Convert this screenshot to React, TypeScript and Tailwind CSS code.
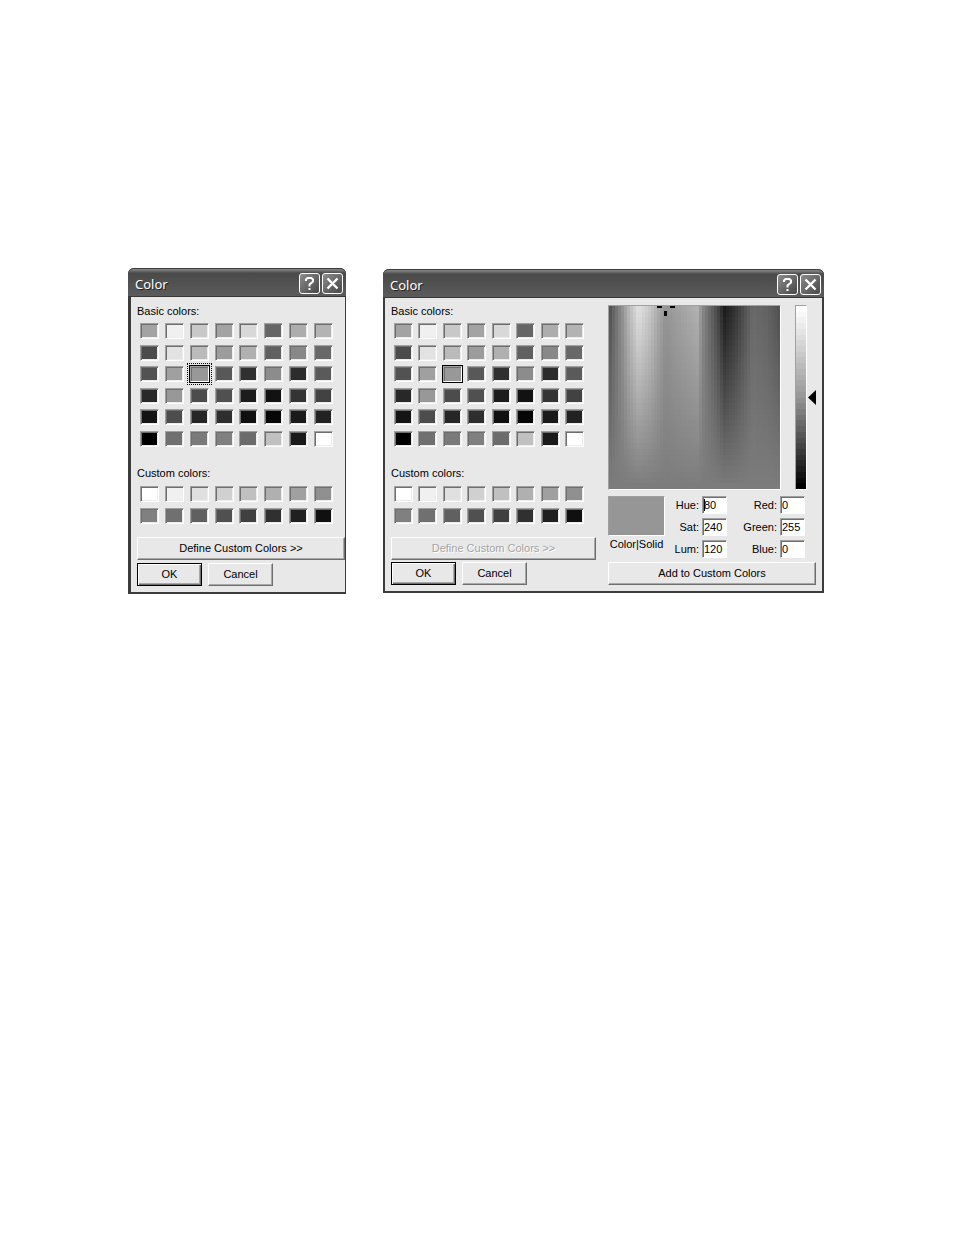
// Two states of the color picker: compact, and expanded with the custom color mixer.
import type { ReactNode } from "react";

const basicColors = [
  "#a3a3a3", "#f0f0f0", "#c8c8c8", "#a3a3a3", "#d8d8d8", "#666666", "#adadad", "#b3b3b3",
  "#4b4b4b", "#e2e2e2", "#bababa", "#9c9c9c", "#b0b0b0", "#606060", "#888888", "#686868",
  "#525252", "#a0a0a0", "#989898", "#585858", "#303030", "#8c8c8c", "#2c2c2c", "#5a5a5a",
  "#282828", "#989898", "#4c4c4c", "#505050", "#1c1c1c", "#121212", "#343434", "#424242",
  "#141414", "#4c4c4c", "#262626", "#2e2e2e", "#101010", "#060606", "#1a1a1a", "#222222",
  "#000000", "#707070", "#7a7a7a", "#808080", "#6c6c6c", "#c0c0c0", "#1a1a1a", "#ffffff",
];

const customColors = [
  "#ffffff", "#f0f0f0", "#e0e0e0", "#d0d0d0", "#c0c0c0", "#b0b0b0", "#a0a0a0", "#909090",
  "#808080", "#707070", "#606060", "#505050", "#404040", "#303030", "#202020", "#101010",
];

const SELECTED = 18;

// [x, gray level] along the top edge of the hue field
const hueStops = [
  [0, 80], [5, 106], [13, 146], [20, 188], [29, 226], [40, 200], [52, 160], [56, 148],
  [64, 156], [88, 176], [93, 136], [100, 106], [108, 72], [115, 28], [125, 50], [138, 90],
  [143, 106], [158, 98], [172, 78],
];

function grayAt(x: number) {
  const i = Math.max(1, hueStops.findIndex((s) => s[0] >= x));
  const [x0, g0] = hueStops[i - 1];
  const [x1, g1] = hueStops[i];
  return Math.round(g0 + ((g1 - g0) * (x - x0)) / (x1 - x0));
}

function gray(v: number) {
  return `rgb(${v}, ${v}, ${v})`;
}

const sunken =
  "border border-t-[#a0a0a0] border-l-[#a0a0a0] border-r-white border-b-white";

function Swatches({
  label,
  colors,
  selected,
  focused,
  className,
}: {
  label: string;
  colors: string[];
  selected?: number;
  focused?: boolean;
  className: string;
}) {
  return (
    <div
      role="group"
      aria-label={label}
      className={`grid grid-cols-[repeat(8,19px)] content-between justify-between pr-3 pl-[3px] ${className}`}
    >
      {colors.map((color, i) => (
        <button
          key={i}
          type="button"
          aria-label={color}
          style={{ backgroundColor: color }}
          className={`h-4 w-[19px] ${sunken} ${
            i === selected
              ? "shadow-[inset_1px_1px_#6e6e6e,0_0_0_1px_#000]"
              : "shadow-[inset_1px_1px_#6e6e6e,inset_-1px_-1px_#ececec]"
          } ${i === selected && focused ? "outline-1 outline-offset-2 outline-dotted outline-black" : ""}`}
        />
      ))}
    </div>
  );
}

function PushButton({
  children,
  primary,
  disabled,
  className = "",
}: {
  children: ReactNode;
  primary?: boolean;
  disabled?: boolean;
  className?: string;
}) {
  return (
    <button
      type="button"
      disabled={disabled}
      className={`h-[23px] border bg-[#e8e8e8] pb-px leading-4 ${
        primary
          ? "border-black shadow-[inset_1px_1px_#fff,inset_-1px_-1px_#6e6e6e,inset_-2px_-2px_#a8a8a8]"
          : "border-t-white border-r-[#6e6e6e] border-b-[#6e6e6e] border-l-white shadow-[inset_-1px_-1px_#a8a8a8]"
      } ${disabled ? "text-[#a4a4a4] [text-shadow:1px_1px_#fff]" : "text-black"} ${className}`}
    >
      {children}
    </button>
  );
}

function CaptionButton({ label, children }: { label: string; children: ReactNode }) {
  return (
    <button
      type="button"
      aria-label={label}
      className="flex size-[21px] items-center justify-center rounded-[3px] border border-white bg-linear-to-br from-[#8c8c8c] to-[#484848]"
    >
      <svg viewBox="0 0 19 19" className="size-[19px]" fill="none" stroke="white">
        {children}
      </svg>
    </button>
  );
}

function Dialog({
  children,
  className,
}: {
  children: ReactNode;
  className: string;
}) {
  return (
    <section aria-label="Color" className={`rounded-t-md bg-[#3c3c3c] ${className}`}>
      <header className="flex h-[29px] items-center gap-0.5 rounded-t-md border-t border-[#3c3c3c] bg-linear-to-b from-[#8a8a8a] via-[#4a4a4a] via-15% to-[#5c5c5c] pt-px pr-[3px] pl-[7px] shadow-[inset_0_-1px_#383838]">
        <h1 className="flex-1 font-['Noto_Sans',sans-serif] text-[13px] leading-5 text-white [text-shadow:1px_1px_#222]">
          Color
        </h1>
        <CaptionButton label="Help">
          <path d="M6 7V5.5L7.5 4h4L13 5.5v2L9.5 10.5v2M9.5 14v2" strokeWidth="2" />
        </CaptionButton>
        <CaptionButton label="Close">
          <path d="M4.5 4.5l10 10M14.5 4.5l-10 10" strokeWidth="2.4" />
        </CaptionButton>
      </header>
      {children}
    </section>
  );
}

function ColorPane({ expanded }: { expanded?: boolean }) {
  return (
    <div className="flex flex-col">
      <h2 className="leading-4">Basic colors:</h2>
      <Swatches
        label="Basic colors"
        colors={basicColors}
        selected={SELECTED}
        focused={!expanded}
        className="mt-1 h-[124px]"
      />
      <h2 className="mt-[18px] leading-4">Custom colors:</h2>
      <Swatches label="Custom colors" colors={customColors} className="mt-[5px] h-[38px]" />
      <PushButton disabled={expanded} className="mt-[13px]">
        Define Custom Colors &gt;&gt;
      </PushButton>
      <div className={`flex gap-1.5 ${expanded ? "mt-0.5" : "mt-[3px]"}`}>
        <PushButton primary className="w-[65px]">
          OK
        </PushButton>
        <PushButton className="w-[65px]">Cancel</PushButton>
      </div>
    </div>
  );
}

function HueField() {
  const columns = Array.from({ length: 57 }, (_, i) => i * 3);
  const rows = Array.from({ length: 32 }, (_, i) => i);
  return (
    <div className={`h-full flex-1 ${sunken}`}>
      <svg
        viewBox="0 0 171 183"
        preserveAspectRatio="none"
        shapeRendering="crispEdges"
        className="size-full"
      >
        {columns.map((x) => (
          <rect key={x} x={x} width="3" height="183" fill={gray(grayAt(x + 1))} />
        ))}
        {rows.map((r) => (
          <rect
            key={r}
            y={(r * 183) / 32}
            width="171"
            height={183 / 32}
            fill="#7c7c7c"
            opacity={r / 31}
          />
        ))}
        <path d="M48 0h5v2h-5zM61 0h5v2h-5zM55 5h3v5h-3z" fill="black" />
      </svg>
    </div>
  );
}

function LumBar() {
  const steps = Array.from({ length: 32 }, (_, i) => {
    const t = i / 31;
    return Math.round(t < 0.5 ? 255 - 210 * t : 300 * (1 - t));
  });
  return (
    <div className={`flex h-full w-3 flex-col ${sunken}`}>
      {steps.map((v, i) => (
        <div key={i} className="flex-1" style={{ backgroundColor: gray(v) }} />
      ))}
    </div>
  );
}

function NumberField({
  label,
  value,
  caret,
}: {
  label: string;
  value: string;
  caret?: boolean;
}) {
  const id = label.toLowerCase();
  return (
    <>
      <label htmlFor={id} className="text-right leading-[18px]">
        {label}:
      </label>
      <input
        id={id}
        type="text"
        defaultValue={value}
        className={`h-[18px] w-full rounded-none bg-white pl-px shadow-[inset_1px_1px_#6e6e6e] ${sunken} ${
          caret
            ? "bg-[linear-gradient(#000,#000)] bg-[length:1px_12px] bg-[position:1px_2px] bg-no-repeat"
            : ""
        }`}
      />
    </>
  );
}

function Mixer() {
  return (
    <div className="mt-0.5 flex flex-col">
      <div className="flex h-[185px]">
        <HueField />
        <div className="ml-3.5 flex">
          <LumBar />
          <svg viewBox="0 0 8 15" className="ml-px w-2 self-center">
            <path d="M8 0v15L0 7.5z" />
          </svg>
        </div>
      </div>
      <div className="mt-1.5 flex pr-[11px]">
        <div className="w-[57px]">
          <div className={`h-10 bg-[#969696] ${sunken}`} />
          <p className="text-center leading-4">Color|Solid</p>
        </div>
        <div className="grid flex-1 grid-cols-[34fr_25px_47fr_25px] gap-x-[3px] gap-y-1">
          <NumberField label="Hue" value="80" caret />
          <NumberField label="Red" value="0" />
          <NumberField label="Sat" value="240" />
          <NumberField label="Green" value="255" />
          <NumberField label="Lum" value="120" />
          <NumberField label="Blue" value="0" />
        </div>
      </div>
      <PushButton className="mt-1">Add to Custom Colors</PushButton>
    </div>
  );
}

export default function App() {
  return (
    <main className="grid min-h-screen grid-cols-[218fr_441fr] items-start gap-x-[37px] bg-white pt-[268px] pr-[130px] pb-16 pl-32 font-['Liberation_Sans',sans-serif] text-[11px] text-black">
      <Dialog className="pb-0.5">
        <div className="mr-px ml-[3px] bg-[#e8e8e8] pt-1.5 pb-1.5 pl-1.5">
          <ColorPane />
        </div>
      </Dialog>
      <Dialog className="mt-px pb-0.5">
        <div className="mx-0.5 grid grid-cols-[205fr_208fr] gap-x-3 bg-[#e8e8e8] px-1.5 pt-[5px] pb-1.5">
          <ColorPane expanded />
          <Mixer />
        </div>
      </Dialog>
    </main>
  );
}
